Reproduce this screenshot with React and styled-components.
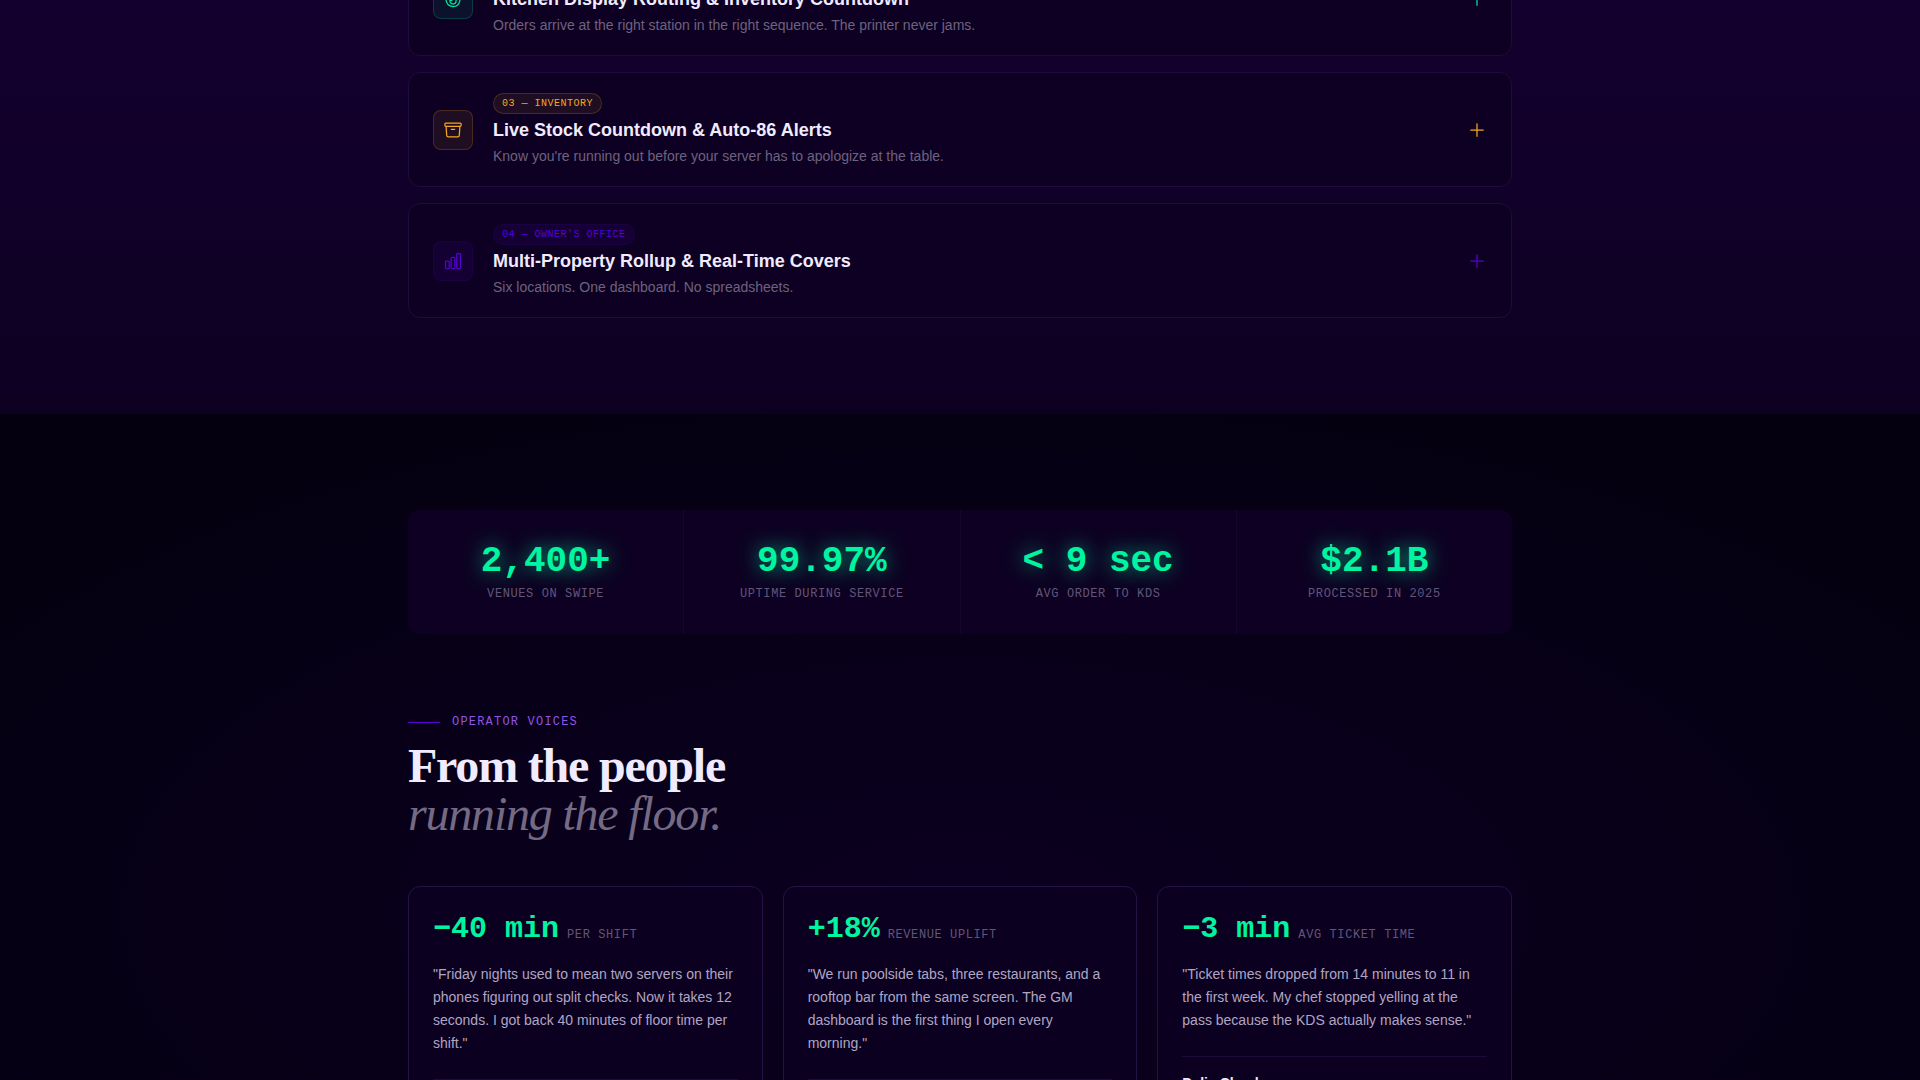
import React, { useState } from "react";
import styled, { createGlobalStyle } from "styled-components";
import {
  HiOutlineArchiveBox,
  HiOutlineChartBar,
  HiOutlineFire,
  HiOutlinePlus,
} from "react-icons/hi2";

const GlobalStyle = createGlobalStyle`
  * {
    box-sizing: border-box;
  }
  body {
    margin: 0;
    background: #040010;
    color: #f0ebff;
    font-family: "Liberation Sans", Arial, sans-serif;
  }
  h2, h3, p, dl, dd, dt, blockquote {
    margin: 0;
  }
`;

const Page = styled.main`
  height: 100vh;
  overflow: hidden;
`;

const Container = styled.div`
  max-width: 1200px;
  margin: 0 auto;
  padding: 0 48px;
`;

const FeatureSection = styled.section`
  margin-top: -59px;
  padding-bottom: 96px;
  background: linear-gradient(180deg, #14002f 0%, #13002d 30%, #0d0021 100%);
`;

const FeatureList = styled.div`
  display: flex;
  flex-direction: column;
  gap: 16px;
`;

const FeatureButton = styled.button`
  display: flex;
  align-items: center;
  gap: 20px;
  width: 100%;
  padding: 20px 24px;
  border: 1px solid #1f0c3a;
  border-radius: 12px;
  background: #0e0022;
  color: inherit;
  font-family: inherit;
  text-align: left;
  cursor: pointer;
`;

const IconBox = styled.span`
  display: flex;
  align-items: center;
  justify-content: center;
  flex-shrink: 0;
  width: 40px;
  height: 40px;
  border: 1px solid rgba(${(props) => props.$rgb}, ${(props) => props.$edge});
  border-radius: 8px;
  background: rgba(${(props) => props.$rgb}, ${(props) => props.$fill});
  color: rgb(${(props) => props.$rgb});
`;

const FeatureBody = styled.span`
  display: flex;
  flex-direction: column;
  align-items: flex-start;
  gap: 4px;
  flex: 1;
`;

const Tag = styled.span`
  height: 21px;
  padding: 0 8px;
  border: 1px solid rgba(${(props) => props.$rgb}, ${(props) => props.$edge});
  border-radius: 11px;
  background: rgba(${(props) => props.$rgb}, ${(props) => props.$fill});
  color: rgb(${(props) => props.$rgb});
  font-family: "Liberation Mono", "Courier New", monospace;
  font-size: 10px;
  line-height: 20px;
  letter-spacing: 0.05em;
  text-transform: uppercase;
`;

const FeatureTitle = styled.span`
  font-size: 18px;
  font-weight: 700;
  line-height: 24px;
`;

const FeatureText = styled.span`
  color: #6d627f;
  font-size: 14px;
  line-height: 20px;
`;

const Toggle = styled.span`
  display: flex;
  color: rgb(${(props) => props.$rgb});
`;

const ProofSection = styled.section`
  padding: 96px 0;
  background: radial-gradient(
    ellipse 1200px 540px at 50% 500px,
    #0b0020 0%,
    #080019 55%,
    #040010 100%
  );
`;

const Stats = styled.dl`
  display: grid;
  grid-template-columns: repeat(4, 1fr);
  gap: 1px;
  overflow: hidden;
  border-radius: 12px;
  background: #13072e;
`;

const Stat = styled.div`
  display: flex;
  flex-direction: column-reverse;
  gap: 5px;
  padding: 34px 24px 31px;
  background: #0d0022;
  text-align: center;
`;

const StatValue = styled.dd`
  color: #00f5a0;
  font-family: "Liberation Mono", "Courier New", monospace;
  font-size: 36px;
  font-weight: 700;
  line-height: 36px;
  text-shadow: 0 0 20px rgba(0, 245, 160, 0.7);
`;

const StatLabel = styled.dt`
  color: #61567a;
  font-family: "Liberation Mono", "Courier New", monospace;
  font-size: 12px;
  line-height: 18px;
  letter-spacing: 0.05em;
  text-transform: uppercase;
`;

const Eyebrow = styled.p`
  display: flex;
  align-items: center;
  gap: 12px;
  margin-top: 80px;
  color: #8f55e6;
  font-family: "Liberation Mono", "Courier New", monospace;
  font-size: 12px;
  line-height: 17px;
  letter-spacing: 0.1em;
  text-transform: uppercase;

  &::before {
    content: "";
    width: 32px;
    height: 1px;
    background: #5a00d4;
  }
`;

const Heading = styled.h2`
  margin: 11px 0 48px;
  font-family: "Liberation Serif", "Times New Roman", serif;
  font-size: 48px;
  font-weight: 700;
  line-height: 48px;
  letter-spacing: -0.025em;

  em {
    display: block;
    color: #746a84;
    font-weight: 400;
  }
`;

const VoiceGrid = styled.div`
  display: grid;
  grid-template-columns: repeat(3, 1fr);
  gap: 20px;
`;

const VoiceCard = styled.article`
  padding: 24px;
  border: 1px solid #231443;
  border-radius: 12px;
  background: #0b0020;
`;

const Metric = styled.p`
  display: flex;
  align-items: flex-end;
  gap: 8px;
  margin-bottom: 16px;
  font-family: "Liberation Mono", "Courier New", monospace;
`;

const MetricValue = styled.strong`
  color: #00f5a0;
  font-size: 30px;
  line-height: 36px;
`;

const MetricLabel = styled.span`
  color: #61567a;
  font-size: 12px;
  line-height: 24px;
  letter-spacing: 0.05em;
  text-transform: uppercase;
`;

const Quote = styled.blockquote`
  margin-bottom: 24px;
  color: #b0a6c4;
  font-size: 14px;
  line-height: 23px;
`;

const Author = styled.footer`
  padding-top: 16px;
  border-top: 1px solid #1a0c34;
  font-size: 14px;
  font-weight: 700;
  line-height: 20px;
`;

const features = [
  {
    tag: "02 — Kitchen",
    title: "Kitchen Display Routing & Inventory Countdown",
    text: "Orders arrive at the right station in the right sequence. The printer never jams.",
    rgb: "0, 229, 160",
    fill: 0.08,
    edge: 0.2,
    icon: HiOutlineFire,
  },
  {
    tag: "03 — Inventory",
    title: "Live Stock Countdown & Auto-86 Alerts",
    text: "Know you're running out before your server has to apologize at the table.",
    rgb: "245, 166, 35",
    fill: 0.08,
    edge: 0.2,
    icon: HiOutlineArchiveBox,
  },
  {
    tag: "04 — Owner's Office",
    title: "Multi-Property Rollup & Real-Time Covers",
    text: "Six locations. One dashboard. No spreadsheets.",
    rgb: "86, 0, 214",
    fill: 0.1,
    edge: 0.1,
    icon: HiOutlineChartBar,
  },
];

const stats = [
  { value: "2,400+", label: "Venues on Swipe" },
  { value: "99.97%", label: "Uptime during service" },
  { value: "< 9 sec", label: "Avg order to KDS" },
  { value: "$2.1B", label: "Processed in 2025" },
];

const voices = [
  {
    value: "−40 min",
    label: "per shift",
    quote:
      "Friday nights used to mean two servers on their phones figuring out split checks. Now it takes 12 seconds. I got back 40 minutes of floor time per shift.",
  },
  {
    value: "+18%",
    label: "revenue uplift",
    quote:
      "We run poolside tabs, three restaurants, and a rooftop bar from the same screen. The GM dashboard is the first thing I open every morning.",
  },
  {
    value: "−3 min",
    label: "avg ticket time",
    quote:
      "Ticket times dropped from 14 minutes to 11 in the first week. My chef stopped yelling at the pass because the KDS actually makes sense.",
    author: "Dalia Chaul",
  },
];

const Feature = ({ feature, open, onToggle }) => {
  const Icon = feature.icon;
  return (
    <FeatureButton type="button" aria-expanded={open} onClick={onToggle}>
      <IconBox $rgb={feature.rgb} $fill={feature.fill} $edge={feature.edge}>
        <Icon size={20} />
      </IconBox>
      <FeatureBody>
        <Tag $rgb={feature.rgb} $fill={feature.fill} $edge={feature.edge}>
          {feature.tag}
        </Tag>
        <FeatureTitle>{feature.title}</FeatureTitle>
        <FeatureText>{feature.text}</FeatureText>
      </FeatureBody>
      <Toggle $rgb={feature.rgb}>
        <HiOutlinePlus size={20} />
      </Toggle>
    </FeatureButton>
  );
};

const App = () => {
  const [openIndex, setOpenIndex] = useState(null);

  return (
    <>
      <GlobalStyle />
      <Page>
        <FeatureSection>
          <Container>
            <FeatureList>
              {features.map((feature, index) => (
                <Feature
                  key={feature.title}
                  feature={feature}
                  open={openIndex === index}
                  onToggle={() =>
                    setOpenIndex(openIndex === index ? null : index)
                  }
                />
              ))}
            </FeatureList>
          </Container>
        </FeatureSection>
        <ProofSection>
          <Container>
            <Stats>
              {stats.map((stat) => (
                <Stat key={stat.label}>
                  <StatLabel>{stat.label}</StatLabel>
                  <StatValue>{stat.value}</StatValue>
                </Stat>
              ))}
            </Stats>
            <Eyebrow>Operator voices</Eyebrow>
            <Heading>
              From the people
              <em>running the floor.</em>
            </Heading>
            <VoiceGrid>
              {voices.map((voice) => (
                <VoiceCard key={voice.value}>
                  <Metric>
                    <MetricValue>{voice.value}</MetricValue>
                    <MetricLabel>{voice.label}</MetricLabel>
                  </Metric>
                  <Quote>{`"${voice.quote}"`}</Quote>
                  <Author>{voice.author}</Author>
                </VoiceCard>
              ))}
            </VoiceGrid>
          </Container>
        </ProofSection>
      </Page>
    </>
  );
};

export default App;
